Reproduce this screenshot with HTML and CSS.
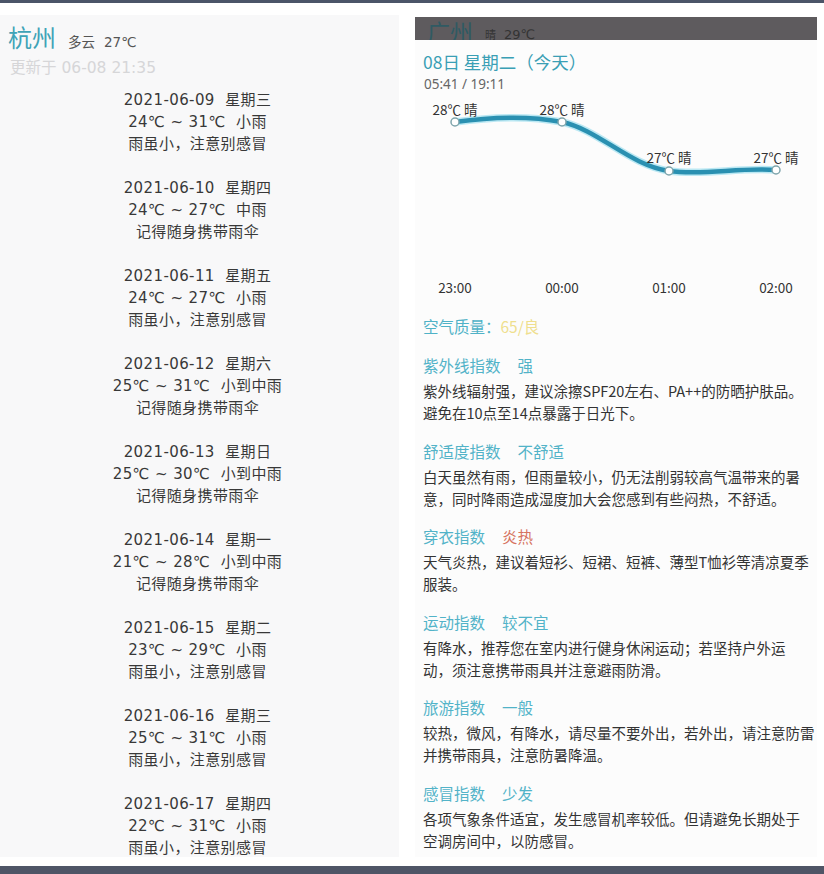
FILE: index.html
```html
<!DOCTYPE html>
<html lang="zh-CN">
<head>
<meta charset="utf-8">
<title>天气</title>
<link rel="stylesheet" href="styles.css">
</head>
<body>
<div class="topbar"></div>
<div class="screen">
  <section class="left">
    <div class="city-row"><span class="city">杭州</span><span class="cond">多云</span><span class="cond">27℃</span></div>
    <div class="updated">更新于 06-08 21:35</div>
    <ul class="forecast">
      <li><div>2021-06-09&nbsp;&nbsp;星期三</div><div>24℃ ~ 31℃&nbsp;&nbsp;小雨</div><div>雨虽小，注意别感冒</div></li>
      <li><div>2021-06-10&nbsp;&nbsp;星期四</div><div>24℃ ~ 27℃&nbsp;&nbsp;中雨</div><div>记得随身携带雨伞</div></li>
      <li><div>2021-06-11&nbsp;&nbsp;星期五</div><div>24℃ ~ 27℃&nbsp;&nbsp;小雨</div><div>雨虽小，注意别感冒</div></li>
      <li><div>2021-06-12&nbsp;&nbsp;星期六</div><div>25℃ ~ 31℃&nbsp;&nbsp;小到中雨</div><div>记得随身携带雨伞</div></li>
      <li><div>2021-06-13&nbsp;&nbsp;星期日</div><div>25℃ ~ 30℃&nbsp;&nbsp;小到中雨</div><div>记得随身携带雨伞</div></li>
      <li><div>2021-06-14&nbsp;&nbsp;星期一</div><div>21℃ ~ 28℃&nbsp;&nbsp;小到中雨</div><div>记得随身携带雨伞</div></li>
      <li><div>2021-06-15&nbsp;&nbsp;星期二</div><div>23℃ ~ 29℃&nbsp;&nbsp;小雨</div><div>雨虽小，注意别感冒</div></li>
      <li><div>2021-06-16&nbsp;&nbsp;星期三</div><div>25℃ ~ 31℃&nbsp;&nbsp;小雨</div><div>雨虽小，注意别感冒</div></li>
      <li><div>2021-06-17&nbsp;&nbsp;星期四</div><div>22℃ ~ 31℃&nbsp;&nbsp;小雨</div><div>雨虽小，注意别感冒</div></li>
    </ul>
  </section>
  <section class="right">
    <div class="dim-strip"><span class="city2">广州</span><span class="cond2">晴</span><span class="cond3">29℃</span></div>
    <div class="card">
      <div class="day-title">08日 星期二（今天）</div>
      <div class="sun">05:41 / 19:11</div>
      <svg class="chart" width="402" height="220" viewBox="0 0 402 220">
        <path class="halo" d="M40 27 C 76 22, 111 20, 147 27 C 184 35, 214 70, 254 76 C 289 81, 324 72, 361 75"/>
        <path class="line" d="M40 27 C 76 22, 111 20, 147 27 C 184 35, 214 70, 254 76 C 289 81, 324 72, 361 75"/>
        <circle class="dot" cx="40" cy="27" r="4"/>
        <circle class="dot" cx="147" cy="27" r="4"/>
        <circle class="dot" cx="254" cy="76" r="4"/>
        <circle class="dot" cx="361" cy="75" r="4"/>
        <text class="lbl" x="40" y="20">28℃ 晴</text>
        <text class="lbl" x="147" y="20">28℃ 晴</text>
        <text class="lbl" x="254" y="68">27℃ 晴</text>
        <text class="lbl" x="361" y="68">27℃ 晴</text>
        <text class="tm" x="40" y="198">23:00</text>
        <text class="tm" x="147" y="198">00:00</text>
        <text class="tm" x="254" y="198">01:00</text>
        <text class="tm" x="361" y="198">02:00</text>
      </svg>
      <div class="aqi">空气质量：<span class="aqi-val">65/良</span></div>
      <div class="idx">
        <div class="idx-title">紫外线指数<span class="idx-val">强</span></div>
        <p class="idx-body">紫外线辐射强，建议涂擦SPF20左右、PA++的防晒护肤品。<br>避免在10点至14点暴露于日光下。</p>
      </div>
      <div class="idx">
        <div class="idx-title">舒适度指数<span class="idx-val">不舒适</span></div>
        <p class="idx-body">白天虽然有雨，但雨量较小，仍无法削弱较高气温带来的暑<br>意，同时降雨造成湿度加大会您感到有些闷热，不舒适。</p>
      </div>
      <div class="idx">
        <div class="idx-title">穿衣指数<span class="idx-val hot">炎热</span></div>
        <p class="idx-body">天气炎热，建议着短衫、短裙、短裤、薄型T恤衫等清凉夏季<br>服装。</p>
      </div>
      <div class="idx">
        <div class="idx-title">运动指数<span class="idx-val">较不宜</span></div>
        <p class="idx-body">有降水，推荐您在室内进行健身休闲运动；若坚持户外运<br>动，须注意携带雨具并注意避雨防滑。</p>
      </div>
      <div class="idx">
        <div class="idx-title">旅游指数<span class="idx-val">一般</span></div>
        <p class="idx-body">较热，微风，有降水，请尽量不要外出，若外出，请注意防雷<br>并携带雨具，注意防暑降温。</p>
      </div>
      <div class="idx">
        <div class="idx-title">感冒指数<span class="idx-val">少发</span></div>
        <p class="idx-body">各项气象条件适宜，发生感冒机率较低。但请避免长期处于<br>空调房间中，以防感冒。</p>
      </div>
    </div>
  </section>
</div>
<div class="bottombar"></div>
</body>
</html>
```
FILE: styles.css
```css
* { box-sizing: border-box; }
html, body {
  margin: 0;
  padding: 0;
  background: #ffffff;
  font-family: "Noto Sans CJK SC", "Noto Sans", sans-serif;
  color: #333333;
}
body { width: 824px; height: 874px; overflow: hidden; }

.topbar { height: 3px; background: #4b5568; }

.screen {
  display: flex;
  align-items: flex-start;
  height: 863px;
}

/* left panel */
.left {
  width: 399px;
  height: 842px;
  margin-top: 12px;
  background: #f8f8f9;
  padding: 7px 0 0 8px;
  font-family: "DejaVu Sans", "Noto Sans CJK SC", sans-serif;
}
.city-row {
  display: flex;
  align-items: baseline;
  height: 30px;
  line-height: 30px;
}
.city {
  font-family: "Noto Sans CJK SC", sans-serif;
  font-size: 24px;
  color: #3fa3b7;
  margin-right: 12px;
}
.cond {
  font-size: 13.5px;
  color: #555555;
  margin-right: 9px;
}
.updated {
  margin-top: 5px;
  padding-left: 2px;
  font-size: 15.5px;
  line-height: 22px;
  color: #d6d6d8;
}
.forecast {
  list-style: none;
  margin: 10px 0 0 0;
  padding: 0 12px 0 0;
  text-align: center;
}
.forecast li {
  font-size: 15px;
  line-height: 22px;
  color: #383838;
  margin-bottom: 22px;
  letter-spacing: 0.4px;
}

/* right panel */
.right {
  width: 402px;
  margin-left: 16px;
  margin-top: 14px;
}
.dim-strip {
  height: 23px;
  overflow: hidden;
  background: #5e5b5e;
  padding-left: 12px;
  padding-top: 6px;
  white-space: nowrap;
  line-height: 17px;
  display: flex;
  align-items: flex-start;
}
.city2 { font-size: 23px; line-height: 17px; color: #2f5a63; margin-right: 12px; }
.cond2 { font-size: 11px; line-height: 17px; color: #333333; margin-right: 8px; padding-top: 3px; }
.cond3 { font-family: "DejaVu Sans", "Noto Sans CJK SC", sans-serif; font-size: 13px; line-height: 17px; color: #333333; padding-top: 3px; }

.card {
  height: 817px;
  background: #fcfcfc;
  padding: 11px 0 0 8px;
}
.day-title {
  font-size: 17.5px;
  line-height: 22px;
  color: #3a9fb5;
}
.sun {
  font-family: "Noto Sans", "Noto Sans CJK SC", sans-serif;
  font-size: 13.5px;
  line-height: 22px;
  color: #666666;
  padding-left: 1px;
}
.chart {
  display: block;
  margin-left: -8px;
}
.halo { fill: none; stroke: #9fdff0; stroke-width: 7.5; stroke-opacity: 0.7; stroke-linecap: round; }
.line { fill: none; stroke: #2a90b1; stroke-width: 4.5; stroke-linecap: round; }
.dot { fill: #ffffff; stroke: #7fa5ac; stroke-width: 1.5; }
.lbl, .tm {
  font-family: "Noto Sans CJK SC", "Noto Sans", sans-serif;
  font-size: 13.5px;
  fill: #333333;
  text-anchor: middle;
}

.aqi {
  font-size: 15.5px;
  line-height: 22px;
  color: #4fb2c7;
}
.aqi-val { color: #efdf8e; }

.idx { margin-top: 17px; }
.idx-title {
  font-size: 15.5px;
  line-height: 22px;
  color: #52b3c8;
}
.idx-val { margin-left: 17px; }
.idx-val.hot { color: #d6735f; }
.idx-body {
  margin: 4px 0 0 0;
  font-size: 14.5px;
  line-height: 22px;
  color: #333333;
  white-space: nowrap;
}
.idx + .idx { margin-top: 15.6px; }

.bottombar {
  height: 8px;
  background: #4f5566;
}
```
